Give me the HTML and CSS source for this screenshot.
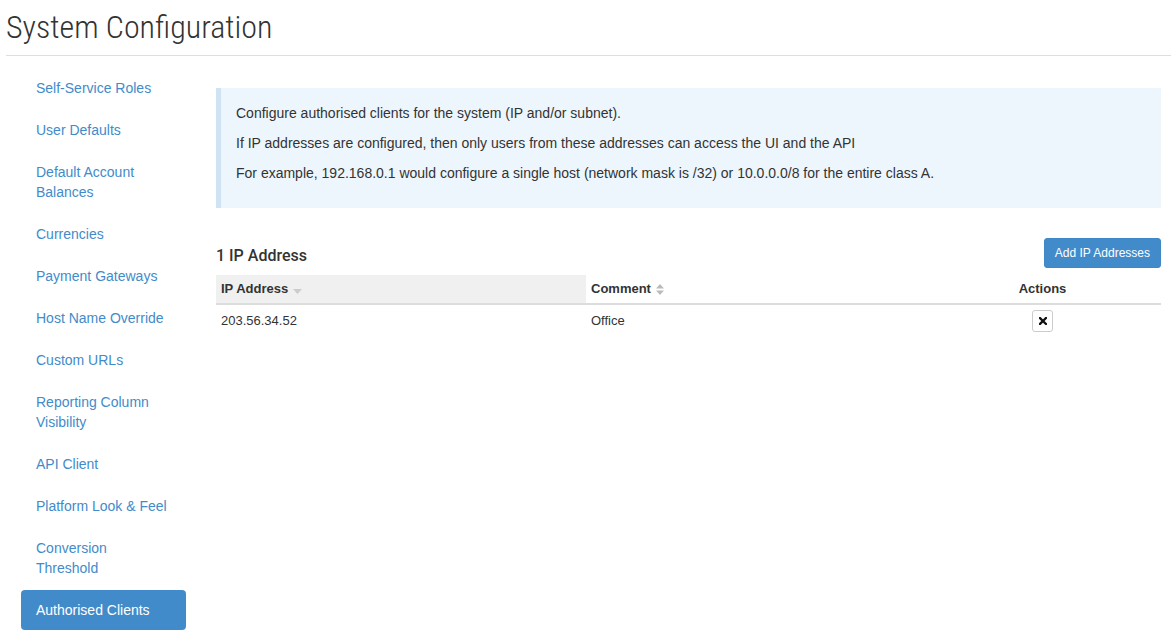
FILE: index.html
```html
<!DOCTYPE html>
<html>
<head>
<meta charset="utf-8">
<link rel="stylesheet" href="styles.css">
</head>
<body>
<div class="page">
  <h1 class="title"><span class="title-text">System Configuration</span></h1>
  <div class="layout">
    <ul class="nav">
      <li><a href="#">Self-Service Roles</a></li>
      <li><a href="#">User Defaults</a></li>
      <li><a href="#">Default Account Balances</a></li>
      <li><a href="#">Currencies</a></li>
      <li><a href="#">Payment Gateways</a></li>
      <li><a href="#">Host Name Override</a></li>
      <li><a href="#">Custom URLs</a></li>
      <li><a href="#">Reporting Column Visibility</a></li>
      <li><a href="#">API Client</a></li>
      <li><a href="#">Platform Look &amp; Feel</a></li>
      <li><a href="#">Conversion Threshold</a></li>
      <li class="active"><a href="#">Authorised Clients</a></li>
    </ul>
    <main class="main">
      <div class="callout">
        <p>Configure authorised clients for the system (IP and/or subnet).</p>
        <p>If IP addresses are configured, then only users from these addresses can access the UI and the API</p>
        <p>For example, 192.168.0.1 would configure a single host (network mask is /32) or 10.0.0.0/8 for the entire class A.</p>
      </div>
      <div class="toolbar">
        <h2 class="count">1 IP Address</h2>
        <button class="btn-primary">Add IP Addresses</button>
      </div>
      <div class="table">
        <div class="th sorted">IP Address
          <svg class="sort" width="9" height="5" viewBox="0 0 9 5"><path d="M0 0h9L4.5 5z" fill="#ccc"/></svg>
        </div>
        <div class="th">Comment
          <svg class="sort" width="8" height="11" viewBox="0 0 8 11"><path d="M0 4.5h8L4 0z M0 6.5h8L4 11z" fill="#bbb"/></svg>
        </div>
        <div class="th center">Actions</div>
        <div class="th"></div>
        <div class="td">203.56.34.52</div>
        <div class="td">Office</div>
        <div class="td center">
          <button class="btn-xs" aria-label="Remove">
            <svg width="8" height="8" viewBox="0 0 8 8"><path d="M1 1L7 7M7 1L1 7" stroke="#111" stroke-width="2.3" stroke-linecap="square"/></svg>
          </button>
        </div>
        <div class="td"></div>
      </div>
    </main>
  </div>
</div>
</body>
</html>
```
FILE: styles.css
```css
* { box-sizing: border-box; }
html, body { margin: 0; padding: 0; background: #fff; }
body {
  font-family: "Liberation Sans", Arial, sans-serif;
  font-size: 14px;
  line-height: 20px;
  color: #333;
}
.page { padding-left: 6px; }
.title {
  font-family: Roboto, "Liberation Sans", sans-serif;
  font-weight: 300;
  font-size: 32px;
  line-height: 35px;
  margin: 10px 0 0;
  padding-bottom: 10px;
  border-bottom: 1px solid #dedede;
  color: #333;
}
.title-text {
  display: inline-block;
  font-stretch: 87.5%;
}
.layout {
  display: flex;
  align-items: flex-start;
  padding-left: 15px;
}
.nav {
  list-style: none;
  margin: 12px 0 0;
  padding: 0;
  width: 165px;
  flex: none;
}
.nav li + li { margin-top: 2px; }
.nav a {
  display: block;
  padding: 10px 15px;
  color: #428bca;
  text-decoration: none;
  border-radius: 4px;
}
.nav .active a { background: #428bca; color: #fff; }
.main {
  flex: 1;
  margin-left: 30px;
  margin-right: 10px;
  padding-top: 32px;
}
.callout {
  background: #eef6fd;
  border-left: 5px solid #cfe3f3;
  padding: 15px;
}
.callout p { margin: 0 0 10px; }
.toolbar {
  display: flex;
  justify-content: space-between;
  align-items: flex-end;
  margin-top: 30px;
}
.count {
  font-family: Roboto, "Liberation Sans", sans-serif;
  font-weight: 500;
  font-size: 16px;
  line-height: 20px;
  margin: 0 0 2px;
  color: #333;
}
.btn-primary {
  font-family: "Liberation Sans", Arial, sans-serif;
  font-size: 12px;
  line-height: 18px;
  height: 30px;
  padding: 5px 10px;
  color: #fff;
  background: #428bca;
  border: 1px solid #3f87c6;
  border-radius: 3px;
}
.table {
  display: grid;
  grid-template-columns: 370px 428px 57px 1fr;
  margin-top: 7px;
}
.th {
  font-size: 13px;
  font-weight: bold;
  line-height: 18px;
  padding: 5px;
  border-bottom: 2px solid #ddd;
  display: flex;
  align-items: center;
  white-space: nowrap;
}
.th.sorted { background: #f0f0f0; }
.th.center { justify-content: center; }
.sort { margin-left: 5px; }
.th.sorted .sort { margin-top: 4px; }
.td {
  font-size: 13px;
  padding: 5px;
  display: flex;
  align-items: center;
  min-height: 32px;
}
.td.center { justify-content: center; }
.btn-xs {
  width: 21px;
  height: 22px;
  padding: 0;
  background: #fff;
  border: 1px solid #ccc;
  border-radius: 3px;
  display: flex;
  align-items: center;
  justify-content: center;
}
```
